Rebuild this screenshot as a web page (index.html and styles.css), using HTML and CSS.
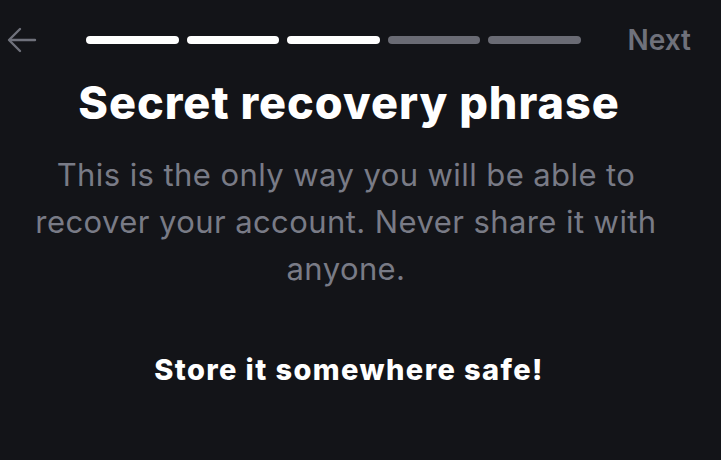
FILE: index.html
```html
<!DOCTYPE html>
<html lang="en">
<head>
<meta charset="utf-8">
<title>Secret recovery phrase</title>
<link rel="stylesheet" href="styles.css">
</head>
<body>
<div class="screen">
  <header class="topbar">
    <button class="back" aria-label="Back">
      <svg width="30" height="26" viewBox="0 0 30 26" fill="none" stroke="#6f717b" stroke-width="2.4" stroke-linecap="round" stroke-linejoin="round">
        <path d="M28 13H3"/>
        <path d="M13 2L2 13l11 11"/>
      </svg>
    </button>
    <div class="steps">
      <span class="step done"></span>
      <span class="step done"></span>
      <span class="step done"></span>
      <span class="step"></span>
      <span class="step"></span>
    </div>
    <span class="next">Next</span>
  </header>
  <main class="content">
    <h1 class="title">Secret recovery phrase</h1>
    <p class="desc">This is the only way you will be able to recover your account. Never share it with anyone.</p>
    <p class="warn">Store it somewhere safe!</p>
  </main>
</div>
</body>
</html>
```
FILE: styles.css
```css
* { box-sizing: border-box; }
html, body {
  margin: 0;
  padding: 0;
  background: #131418;
}
body {
  font-family: Inter, "Noto Sans", sans-serif;
  color: #ffffff;
  width: 721px;
  height: 460px;
  overflow: hidden;
}
.screen {
  width: 721px;
}
.topbar {
  display: flex;
  align-items: center;
  height: 80px;
  padding: 0 30px 0 7px;
}
.back {
  background: none;
  border: 0;
  padding: 0;
  width: 30px;
  height: 26px;
  display: flex;
}
.steps {
  display: flex;
  gap: 8px;
  margin-left: 49px;
  width: 495px;
}
.step {
  flex: 1;
  height: 8px;
  border-radius: 4px;
  background: #6a6b74;
}
.step.done {
  background: #ffffff;
}
.next {
  margin-left: auto;
  font-size: 28px;
  font-weight: 600;
  color: #6f717b;
}
.content {
  display: flex;
  flex-direction: column;
  align-items: center;
  text-align: center;
  padding-right: 23px;
}
.title {
  margin: 0;
  font-size: 45px;
  font-weight: 800;
  line-height: 46px;
  letter-spacing: 1px;
}
.desc {
  margin: 25px 6px 0 0;
  max-width: 660px;
  font-size: 31px;
  line-height: 47px;
  letter-spacing: 0.42px;
  color: #797b86;
}
.warn {
  margin: 60px 0 0;
  font-size: 29px;
  font-weight: 800;
  line-height: 36px;
  letter-spacing: 1.4px;
}
```
